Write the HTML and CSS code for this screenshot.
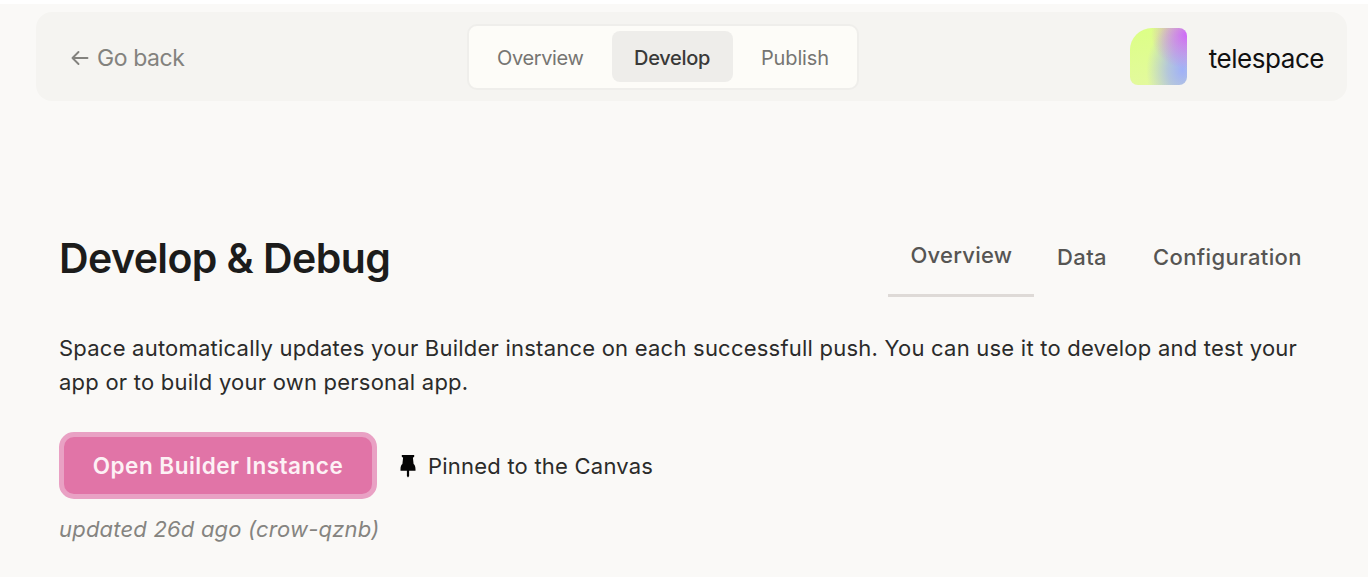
FILE: index.html
```html
<!DOCTYPE html>
<html lang="en">
<head>
<meta charset="utf-8">
<title>telespace</title>
<link rel="stylesheet" href="styles.css">
</head>
<body>
<div class="page">
  <header class="topbar">
    <a class="back"><svg class="back-arrow" viewBox="0 0 18 16"><path d="M7.500 2 1.500 8l6 6M1.500 8h15"/></svg><span class="back-label">Go back</span></a>
    <nav class="switcher">
      <a class="seg seg-overview"><span>Overview</span></a>
      <a class="seg seg-active"><span>Develop</span></a>
      <a class="seg seg-publish"><span>Publish</span></a>
    </nav>
    <div class="brand"><span class="logo"></span><span class="brand-name">telespace</span></div>
  </header>
  <main class="content">
    <div class="heading">
      <h1 class="title"><span>Develop &amp; Debug</span></h1>
      <nav class="tabs">
        <a class="tab tab-active"><span>Overview</span></a>
        <a class="tab tab-data"><span>Data</span></a>
        <a class="tab tab-config"><span>Configuration</span></a>
      </nav>
    </div>
    <p class="intro"><span class="line1">Space automatically updates your Builder instance on each successfull push. You can use it to develop and test your</span><br><span class="line2">app or to build your own personal app.</span></p>
    <div class="actions">
      <button class="open"><span>Open Builder Instance</span></button>
      <svg class="pin" viewBox="0 0 16 24"><path d="M1.800 1h12.400v1.800l-1.300 1 .7 6.200c1.200.9 1.900 2.700 1.900 5.200v1.600H9.100V22L8 23.500 6.900 22v-5.200H.5v-1.600c0-2.500.7-4.300 1.900-5.200l.7-6.200-1.300-1z"/></svg>
      <span class="pinned">Pinned to the Canvas</span>
    </div>
    <p class="updated"><span>updated 26d ago (crow-qznb)</span></p>
  </main>
</div>
</body>
</html>
```
FILE: styles.css
```css
* { box-sizing: border-box; }
body { margin: 0; background: #fff; font-family: Inter, "Liberation Sans", sans-serif; color: #2b2b2a; }
.page { margin-top: 4px; height: 573px; padding: 8px 21px 0 36px; background: #faf9f7; }
.topbar { display: flex; align-items: center; height: 89px; padding: 0 23px 0 35px; border-radius: 16px; background: #f5f4f1; }
.back { display: flex; align-items: center; width: 396px; color: #83827e; font-size: 23px; line-height: 30px; letter-spacing: -.42px; }
.back-label { padding-top: 3px; }
.back-arrow { width: 18px; height: 16px; margin: 2px 8px 0 0; fill: none; stroke: #83827e; stroke-width: 1.9; stroke-linecap: round; stroke-linejoin: round; }
.switcher { display: flex; align-items: center; width: 392px; height: 66px; padding: 0 4px; border: 2px solid #efeeeb; border-radius: 10px; background: #fdfcf8; }
.seg { height: 51px; line-height: 54px; font-size: 20px; color: #767572; letter-spacing: -.36px; }
.seg-overview { padding-left: 24px; width: 139px; }
.seg-active { width: 121px; padding-left: 22px; border-radius: 8px; background: #eeedea; color: #393938; font-weight: 500; letter-spacing: -.3px; }
.seg-publish { padding-left: 28px; letter-spacing: -.15px; }
.brand { display: flex; align-items: center; margin-left: auto; color: #111; }
.logo { width: 57px; height: 57px; margin-right: 22px; border-radius: 22px 8px 8px 8px; background:
  radial-gradient(ellipse 36px 34px at 100% 12%, #cf68fa 0%, rgba(207,104,250,.6) 40%, rgba(207,104,250,0) 100%),
  radial-gradient(ellipse 36px 50px at 92% 74%, #a0b0f8 0%, rgba(160,176,248,.7) 40%, rgba(160,176,248,0) 100%),
  linear-gradient(170deg, #dcff85, #e4f9a0); }
.brand-name { padding-top: 5px; font-size: 26px; line-height: 34px; letter-spacing: -.45px; }
.content { padding-left: 23px; }
.heading { display: flex; justify-content: space-between; height: 196px; padding-top: 124px; }
.title { margin: 8px 0 0; font-size: 41px; line-height: 50px; font-weight: 600; color: #1c1c1b; letter-spacing: -.58px; }
.tabs { display: flex; height: 72px; color: #565553; font-size: 22px; font-weight: 500; line-height: 28px; letter-spacing: .38px; }
.tab { padding-top: 18px; }
.tab-active { width: 146px; padding: 16px 0 0 22.500px; border-bottom: 3px solid #dedad7; margin-right: 23px; letter-spacing: .25px; }
.tab-data { width: 96px; }
.tab-config { width: 194px; }
.intro { margin: 34px 0 0; font-size: 22px; line-height: 34px; white-space: nowrap; letter-spacing: .226px; }
.actions { display: flex; align-items: center; height: 67px; margin-top: 33px; }
.open { width: 318px; height: 67px; padding: 0; border: 5px solid #e9a1c4; border-radius: 15px; background: #e174a7; color: #fdf1f5; font: 600 22.5px/30px Inter, sans-serif; letter-spacing: .5px; }
.pin { width: 16px; height: 24px; margin: 0 12px 0 23px; fill: #050505; }
.pinned { font-size: 22px; line-height: 30px; letter-spacing: .22px; }
.updated { margin: 15px 0 0; font-size: 22px; line-height: 30px; font-style: italic; color: #858480; letter-spacing: .2px; }
```
